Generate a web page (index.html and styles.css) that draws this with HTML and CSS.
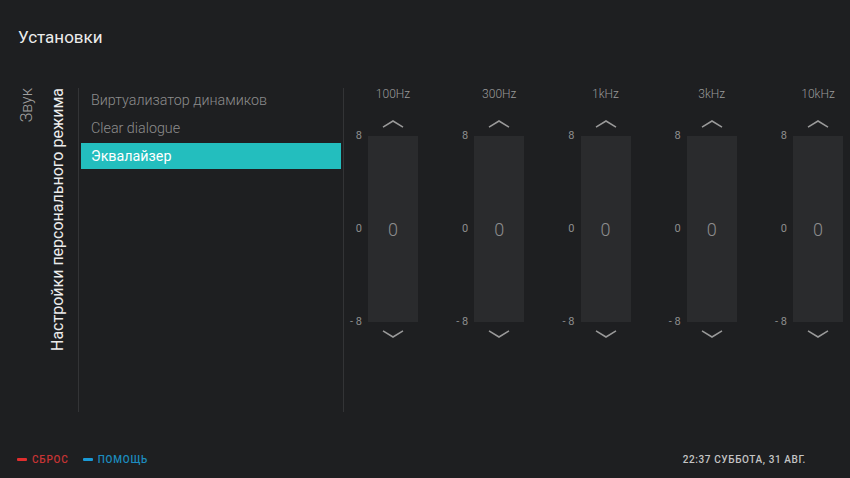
FILE: index.html
```html
<!DOCTYPE html>
<html lang="ru">
<head>
<meta charset="utf-8">
<title>Установки</title>
<link rel="stylesheet" href="styles.css">
</head>
<body>
<div class="page">
  <header class="header"><h1 class="title">Установки</h1></header>
  <main class="main">
    <div class="side">
      <div class="vlabel vlabel-sec">Звук</div>
      <div class="vlabel vlabel-main">Настройки персонального режима</div>
    </div>
    <nav class="menu">
      <div class="item">Виртуализатор динамиков</div>
      <div class="item">Clear dialogue</div>
      <div class="item item-active">Эквалайзер</div>
    </nav>
    <section class="eq">
      <div class="band">
        <div class="freq">100Hz</div>
        <svg class="chev" width="22" height="8" viewBox="0 0 22 8"><polyline points="1,7.2 11,1 21,7.2"/></svg>
        <div class="scale"><span>8</span><span>0</span><span>- 8</span></div>
        <div class="bar"><span>0</span></div>
        <svg class="chev chev-down" width="22" height="8" viewBox="0 0 22 8"><polyline points="1,0.8 11,7 21,0.8"/></svg>
      </div>
      <div class="band">
        <div class="freq">300Hz</div>
        <svg class="chev" width="22" height="8" viewBox="0 0 22 8"><polyline points="1,7.2 11,1 21,7.2"/></svg>
        <div class="scale"><span>8</span><span>0</span><span>- 8</span></div>
        <div class="bar"><span>0</span></div>
        <svg class="chev chev-down" width="22" height="8" viewBox="0 0 22 8"><polyline points="1,0.8 11,7 21,0.8"/></svg>
      </div>
      <div class="band">
        <div class="freq">1kHz</div>
        <svg class="chev" width="22" height="8" viewBox="0 0 22 8"><polyline points="1,7.2 11,1 21,7.2"/></svg>
        <div class="scale"><span>8</span><span>0</span><span>- 8</span></div>
        <div class="bar"><span>0</span></div>
        <svg class="chev chev-down" width="22" height="8" viewBox="0 0 22 8"><polyline points="1,0.8 11,7 21,0.8"/></svg>
      </div>
      <div class="band">
        <div class="freq">3kHz</div>
        <svg class="chev" width="22" height="8" viewBox="0 0 22 8"><polyline points="1,7.2 11,1 21,7.2"/></svg>
        <div class="scale"><span>8</span><span>0</span><span>- 8</span></div>
        <div class="bar"><span>0</span></div>
        <svg class="chev chev-down" width="22" height="8" viewBox="0 0 22 8"><polyline points="1,0.8 11,7 21,0.8"/></svg>
      </div>
      <div class="band">
        <div class="freq">10kHz</div>
        <svg class="chev" width="22" height="8" viewBox="0 0 22 8"><polyline points="1,7.2 11,1 21,7.2"/></svg>
        <div class="scale"><span>8</span><span>0</span><span>- 8</span></div>
        <div class="bar"><span>0</span></div>
        <svg class="chev chev-down" width="22" height="8" viewBox="0 0 22 8"><polyline points="1,0.8 11,7 21,0.8"/></svg>
      </div>
    </section>
  </main>
  <footer class="footer">
    <div class="keys">
      <span class="key key-red"><i class="dash"></i>СБРОС</span>
      <span class="key key-blue"><i class="dash"></i>ПОМОЩЬ</span>
    </div>
    <div class="clock">22:37 СУББОТА, 31 АВГ.</div>
  </footer>
</div>
</body>
</html>
```

FILE: styles.css
```css
* { box-sizing: border-box; }
html, body {
  margin: 0;
  padding: 0;
  background: #1e1f21;
}
body {
  font-family: Roboto, "Liberation Sans", sans-serif;
  color: #e6e6e6;
}
.page {
  width: 850px;
  height: 478px;
  display: flex;
  flex-direction: column;
  overflow: hidden;
}
.header {
  height: 88px;
  flex: none;
  padding: 27px 18px 0;
}
.title {
  margin: 0;
  font-size: 17px;
  line-height: 20px;
  font-weight: 400;
  color: #ececec;
}
.main {
  height: 324px;
  flex: none;
  display: flex;
}
.side {
  width: 78px;
  flex: none;
  display: flex;
  align-items: flex-start;
  padding-left: 17px;
  gap: 12px;
}
.vlabel {
  writing-mode: vertical-rl;
  transform: rotate(180deg);
  white-space: nowrap;
}
.vlabel-sec {
  font-size: 16px;
  line-height: 19px;
  font-weight: 300;
  color: #a0a0a0;
}
.vlabel-main {
  font-size: 16px;
  line-height: 20px;
  color: #ececec;
}
.menu {
  width: 266px;
  flex: none;
  border-left: 1px solid #333436;
  border-right: 1px solid #333436;
  padding: 0 2px;
  display: flex;
  flex-direction: column;
  gap: 2px;
}
.item {
  height: 26px;
  line-height: 26px;
  padding-left: 10px;
  font-size: 14.3px;
  font-weight: 300;
  color: #8d8d8d;
  white-space: nowrap;
}
.item:first-child { margin-top: -1px; }
.item-active {
  background: #23bebe;
  color: #ffffff;
  font-weight: 400;
}
.eq {
  flex: none;
  display: flex;
}
.band {
  width: 106.25px;
  flex: none;
  display: grid;
  grid-template-columns: 18px 50px;
  column-gap: 6px;
  align-content: start;
}
.freq {
  grid-column: 2;
  grid-row: 1;
  text-align: center;
  font-size: 12px;
  line-height: 12px;
  font-weight: 300;
  color: #9a9a9a;
  white-space: nowrap;
}
.chev {
  grid-column: 2;
  grid-row: 2;
  justify-self: center;
  margin-top: 20px;
  fill: none;
  stroke: #9a9a9a;
  stroke-width: 1.5;
}
.chev-down {
  grid-row: 4;
  margin-top: 8px;
}
.scale {
  grid-column: 1;
  grid-row: 3;
  margin-top: 8px;
  height: 186px;
  display: flex;
  flex-direction: column;
  justify-content: space-between;
  align-items: flex-end;
  font-size: 11px;
  line-height: 12px;
  color: #8d8d8d;
}
.scale span { margin: -6px 0; white-space: nowrap; }
.bar {
  grid-column: 2;
  grid-row: 3;
  margin-top: 8px;
  height: 186px;
  background: #2a2b2d;
  display: flex;
  align-items: center;
  justify-content: center;
  font-size: 18px;
  font-weight: 300;
  color: #8d8d8d;
}
.footer {
  margin-top: auto;
  height: 38px;
  flex: none;
  display: flex;
  align-items: center;
  justify-content: space-between;
  padding: 0 44px 0 17px;
}
.keys {
  display: flex;
  gap: 14px;
}
.key {
  display: flex;
  align-items: center;
  gap: 5px;
  font-size: 10px;
  font-weight: 500;
  letter-spacing: 0.8px;
}
.dash {
  display: block;
  width: 10px;
  height: 3px;
  border-radius: 1px;
}
.key-red { color: #c63434; }
.key-red .dash { background: #e02e2e; }
.key-blue { color: #1c8cbf; }
.key-blue .dash { background: #1a9ad6; }
.clock {
  font-size: 10px;
  font-weight: 500;
  letter-spacing: 0.6px;
  color: #c4c4c4;
}
```
